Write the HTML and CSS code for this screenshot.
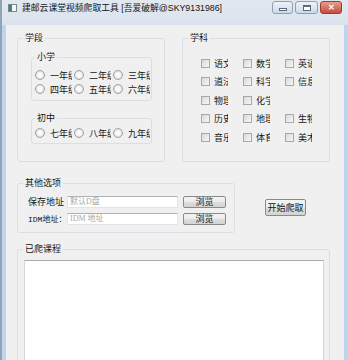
FILE: index.html
```html
<!DOCTYPE html>
<html>
<head>
  <meta charset="utf-8">
  <title>建邮云课堂视频爬取工具</title>
  <link rel="stylesheet" href="styles.css">
</head>
<body>
  <div class="window">
    <div class="titlebar">
      <svg class="app-icon" width="9" height="8" viewBox="0 0 9 8">
        <rect x="0.5" y="0.5" width="8" height="7" fill="#f4f6f8" stroke="#7a8694" />
        <rect x="1" y="1" width="3" height="6" fill="#3f8a6c" />
      </svg>
      <span class="title">建邮云课堂视频爬取工具 [吾爱破解@SKY9131986]</span>
      <div class="caption-buttons">
        <span class="cap cap-min"><i></i></span>
        <span class="cap cap-max"><i></i></span>
        <span class="cap cap-close">&#x2715;</span>
      </div>
    </div>

    <div class="client">
      <div class="top-row">
        <fieldset class="group grade">
          <legend>学段</legend>
          <div class="inner">
            <fieldset class="group sub primary">
              <legend>小学</legend>
              <div class="inner radio-grid">
                <label class="radio"><span class="dot"></span><span class="txt">一年级</span></label>
                <label class="radio"><span class="dot"></span><span class="txt">二年级</span></label>
                <label class="radio"><span class="dot"></span><span class="txt">三年级</span></label>
                <label class="radio"><span class="dot"></span><span class="txt">四年级</span></label>
                <label class="radio"><span class="dot"></span><span class="txt">五年级</span></label>
                <label class="radio"><span class="dot"></span><span class="txt">六年级</span></label>
              </div>
            </fieldset>
            <fieldset class="group sub junior">
              <legend>初中</legend>
              <div class="inner radio-grid">
                <label class="radio"><span class="dot"></span><span class="txt">七年级</span></label>
                <label class="radio"><span class="dot"></span><span class="txt">八年级</span></label>
                <label class="radio"><span class="dot"></span><span class="txt">九年级</span></label>
              </div>
            </fieldset>
          </div>
        </fieldset>

        <fieldset class="group subject">
          <legend>学科</legend>
          <div class="inner check-grid">
            <label class="check"><span class="box"></span><span class="txt">语文</span></label>
            <label class="check"><span class="box"></span><span class="txt">数学</span></label>
            <label class="check"><span class="box"></span><span class="txt">英语</span></label>
            <label class="check"><span class="box"></span><span class="txt">道法</span></label>
            <label class="check"><span class="box"></span><span class="txt">科学</span></label>
            <label class="check"><span class="box"></span><span class="txt">信息</span></label>
            <label class="check"><span class="box"></span><span class="txt">物理</span></label>
            <label class="check"><span class="box"></span><span class="txt">化学</span></label>
            <span></span>
            <label class="check"><span class="box"></span><span class="txt">历史</span></label>
            <label class="check"><span class="box"></span><span class="txt">地理</span></label>
            <label class="check"><span class="box"></span><span class="txt">生物</span></label>
            <label class="check"><span class="box"></span><span class="txt">音乐</span></label>
            <label class="check"><span class="box"></span><span class="txt">体育</span></label>
            <label class="check"><span class="box"></span><span class="txt">美术</span></label>
          </div>
        </fieldset>
      </div>

      <div class="options-row">
        <fieldset class="group other">
          <legend>其他选项</legend>
          <div class="inner">
            <div class="field">
              <span class="field-label">保存地址</span>
              <input class="textbox" type="text" placeholder="默认D盘">
              <button class="btn browse">浏览</button>
            </div>
            <div class="field">
              <span class="field-label mono">IDM地址：</span>
              <input class="textbox" type="text" placeholder="IDM 地址">
              <button class="btn browse">浏览</button>
            </div>
          </div>
        </fieldset>
        <button class="btn start">开始爬取</button>
      </div>

      <fieldset class="group done">
        <legend>已爬课程</legend>
        <div class="inner">
          <div class="listbox"></div>
        </div>
      </fieldset>
    </div>
  </div>
</body>
</html>
```

FILE: styles.css
```css
* {
  box-sizing: border-box;
}
body {
  margin: 0;
  background-color: #f0f0f0;
  font-family: "Liberation Sans", "Noto Sans CJK SC", sans-serif;
  font-size: 9px;
  color: #141414;
  overflow: hidden;
}
.window {
  display: flex;
  flex-direction: column;
  width: 350px;
  height: 360px;
  background-color: #bfd4ee;
  border-left: 2px solid #93a3b6;
}

/* title bar */
.titlebar {
  display: flex;
  flex-shrink: 0;
  align-items: flex-start;
  height: 25px;
  padding: 0 8px 0 6px;
  background: linear-gradient(#e2e8f0, #dae3ed);
}
.app-icon {
  margin: 4px 5px 0 0;
}
.title {
  font-size: 8.8px;
  line-height: 12px;
  margin-top: 2px;
  white-space: nowrap;
}
.caption-buttons {
  display: flex;
  gap: 2px;
  margin-left: auto;
  margin-top: 1px;
}
.cap {
  display: flex;
  justify-content: center;
  align-items: center;
  width: 21px;
  height: 13px;
  border: 1px solid #8e9fb5;
  border-radius: 3px;
  background: linear-gradient(#eef2f8, #cdd9e7);
}
.cap-max {
  width: 23px;
}
.cap-min i {
  width: 8px;
  height: 3px;
  margin-top: 4px;
  border: 1px solid #5b6b80;
  background-color: #fff;
}
.cap-max i {
  width: 8px;
  height: 6px;
  border: 1px solid #5b6b80;
  border-top-width: 2px;
  background-color: #fff;
}
.cap-close {
  width: 22px;
  border-color: #9c3b2e;
  background: linear-gradient(#e4a093, #c84a38);
  color: #fff;
  font-size: 8px;
  font-weight: bold;
}

/* client area */
.client {
  flex: 1;
  width: 338px;
  margin-left: 4px;
  padding: 8px 0 0 11px;
  background-color: #f0f0f0;
}
.group {
  min-width: 0;
  margin: 0;
  padding: 0;
  border: 1px solid #dadee2;
  border-radius: 3px;
}
.group legend {
  margin-left: 5px;
  padding: 0 2px;
  line-height: 11px;
}
.top-row {
  display: flex;
  gap: 17px;
}
.grade {
  width: 148px;
  flex-shrink: 0;
}
.grade > .inner {
  padding: 8px 12px 17px 13px;
}
.sub legend {
  margin-left: 3px;
}
.primary > .inner {
  padding: 5px 0 4px 3px;
}
.junior {
  margin-top: 12px;
}
.junior > .inner {
  padding: 2px 0 3px 3px;
}
.radio-grid {
  display: grid;
  grid-template-columns: repeat(3, 39px);
  grid-auto-rows: 14px;
}
.radio {
  display: flex;
  align-items: center;
}
.dot {
  width: 10px;
  height: 10px;
  border: 1px solid #a3a3a3;
  border-radius: 50%;
  background: radial-gradient(#fbfbfb 35%, #dadada 75%);
  flex-shrink: 0;
}
.radio .txt {
  width: 22px;
  margin-left: 5px;
  overflow: hidden;
  white-space: nowrap;
}
.subject {
  width: 148px;
  flex-shrink: 0;
}
.subject > .inner {
  padding: 10px 0 0 18px;
}
.check-grid {
  display: grid;
  grid-template-columns: repeat(3, 42px);
  grid-auto-rows: 18.5px;
}
.check {
  display: flex;
  align-items: center;
}
.box {
  width: 9px;
  height: 9px;
  border: 1px solid #a8a8a8;
  background: linear-gradient(135deg, #d9d9d9, #f7f7f7);
  flex-shrink: 0;
}
.check .txt {
  width: 14px;
  margin-left: 4px;
  overflow: hidden;
  white-space: nowrap;
}

/* other options */
.options-row {
  display: flex;
  align-items: flex-start;
  gap: 30px;
  margin-top: 16px;
}
.other {
  width: 218px;
  flex-shrink: 0;
}
.other > .inner {
  padding: 6px 0 7px 10px;
}
.field {
  display: flex;
  align-items: center;
  height: 13px;
}
.field + .field {
  margin-top: 4px;
}
.field-label {
  width: 39px;
  white-space: nowrap;
}
.mono {
  font-family: "Liberation Mono", "Noto Sans CJK SC", monospace;
  font-size: 8px;
}
.textbox {
  width: 111px;
  height: 12px;
  padding: 0 2px;
  border: 1px solid #e1e5ea;
  border-top-color: #adb1b8;
  background-color: #fff;
  font-family: "Liberation Serif", "Noto Sans CJK SC", serif;
  font-size: 8px;
  outline: none;
}
.textbox::placeholder {
  color: #a9a9a9;
}
.btn {
  padding: 0;
  border: 1px solid #8a8a8a;
  border-radius: 2px;
  background: linear-gradient(#f4f4f4 0%, #ebebeb 50%, #dddddd 51%, #d3d3d3 100%);
  font-family: inherit;
  font-size: 9px;
  color: #141414;
}
.browse {
  width: 43px;
  height: 12px;
  margin-left: 5px;
  line-height: 10px;
}
.start {
  width: 41px;
  height: 17px;
  margin-top: 21px;
}

/* finished list */
.done {
  width: 313px;
  margin-top: 11px;
}
.done > .inner {
  padding: 5px 0 0 6px;
}
.listbox {
  width: 300px;
  height: 140px;
  border: 1px solid #d6d6d6;
  border-top-color: #a9a9a9;
  background-color: #fff;
}
```
